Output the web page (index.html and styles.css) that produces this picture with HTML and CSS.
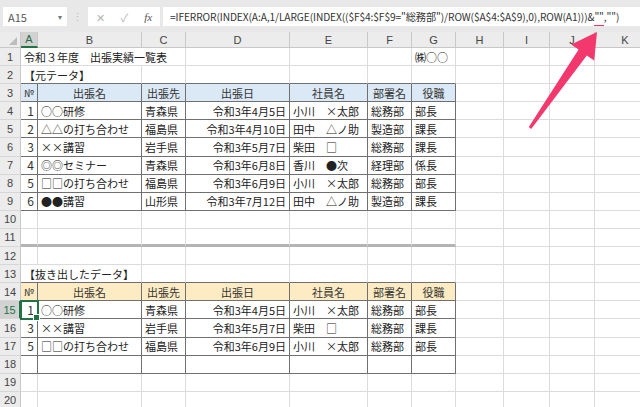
FILE: index.html
```html
<!DOCTYPE html>
<html lang="ja">
<head>
    <meta charset="UTF-8">
    <title>出張実績一覧表</title>
    <link rel="stylesheet" href="styles.css">
</head>
<body>
    <div class="toolbar">
        <div class="name-box"><span>A15</span><span class="caret">▾</span></div>
        <div class="sep">⋮</div>
        <div class="fn-box"><span>✕</span><span>✓</span><span class="fx">fx</span></div>
        <div class="formula">=IFERROR(INDEX(A:A,1/LARGE(INDEX(($F$4:$F$9="総務部")/ROW($A$4:$A$9),0),ROW(A1)))&amp;<span class="mark">""</span>,"")</div>
    </div>

    <table class="sheet">
        <colgroup>
            <col class="w-rh"><col class="w-a"><col class="w-b"><col class="w-c"><col class="w-d"><col class="w-e">
            <col class="w-f"><col class="w-g"><col class="w-h"><col class="w-i"><col class="w-j"><col class="w-k">
        </colgroup>
        <tr class="colhead">
            <th class="corner"></th><th class="on">A</th><th>B</th><th>C</th><th>D</th><th>E</th>
            <th>F</th><th>G</th><th>H</th><th>I</th><th>J</th><th>K</th>
        </tr>
        <tr>
            <td class="rh">1</td><td colspan="3">令和３年度　出張実績一覧表</td><td></td><td></td><td></td><td>㈱○○</td><td></td><td></td><td></td><td></td>
        </tr>
        <tr>
            <td class="rh">2</td><td colspan="2" class="top">【元テータ】</td><td class="top"></td><td class="top"></td><td class="top"></td><td class="top"></td><td class="top"></td><td></td><td></td><td></td><td></td>
        </tr>
        <tr>
            <td class="rh">3</td><td class="t hd blue no">№</td><td class="t hd blue">出張名</td><td class="t hd blue">出張先</td><td class="t hd blue">出張日</td><td class="t hd blue">社員名</td><td class="t hd blue">部署名</td><td class="t hd blue">役職</td><td></td><td></td><td></td><td></td>
        </tr>
        <tr>
            <td class="rh">4</td><td class="t num">1</td><td class="t">○○研修</td><td class="t">青森県</td><td class="t r">令和3年4月5日</td><td class="t">小川　×太郎</td><td class="t">総務部</td><td class="t">部長</td><td></td><td></td><td></td><td></td>
        </tr>
        <tr>
            <td class="rh">5</td><td class="t num">2</td><td class="t">△△の打ち合わせ</td><td class="t">福島県</td><td class="t r">令和3年4月10日</td><td class="t">田中　△ノ助</td><td class="t">製造部</td><td class="t">課長</td><td></td><td></td><td></td><td></td>
        </tr>
        <tr>
            <td class="rh">6</td><td class="t num">3</td><td class="t">××講習</td><td class="t">岩手県</td><td class="t r">令和3年5月7日</td><td class="t">柴田　□</td><td class="t">総務部</td><td class="t">課長</td><td></td><td></td><td></td><td></td>
        </tr>
        <tr>
            <td class="rh">7</td><td class="t num">4</td><td class="t">◎◎セミナー</td><td class="t">青森県</td><td class="t r">令和3年6月8日</td><td class="t">香川　●次</td><td class="t">経理部</td><td class="t">係長</td><td></td><td></td><td></td><td></td>
        </tr>
        <tr>
            <td class="rh">8</td><td class="t num">5</td><td class="t">□□の打ち合わせ</td><td class="t">福島県</td><td class="t r">令和3年6月9日</td><td class="t">小川　×太郎</td><td class="t">総務部</td><td class="t">部長</td><td></td><td></td><td></td><td></td>
        </tr>
        <tr>
            <td class="rh">9</td><td class="t num">6</td><td class="t">●●講習</td><td class="t">山形県</td><td class="t r">令和3年7月12日</td><td class="t">田中　△ノ助</td><td class="t">製造部</td><td class="t">課長</td><td></td><td></td><td></td><td></td>
        </tr>
        <tr>
            <td class="rh">10</td><td></td><td></td><td></td><td></td><td></td><td></td><td></td><td></td><td></td><td></td><td></td>
        </tr>
        <tr class="split">
            <td class="rh">11</td><td class="fz"></td><td class="fz"></td><td class="fz"></td><td class="fz"></td><td class="fz"></td><td class="fz"></td><td class="fz"></td><td></td><td></td><td></td><td></td>
        </tr>
        <tr>
            <td class="rh">12</td><td></td><td></td><td></td><td></td><td></td><td></td><td></td><td></td><td></td><td></td><td></td>
        </tr>
        <tr>
            <td class="rh">13</td><td colspan="2" class="top">【抜き出したデータ】</td><td class="top"></td><td class="top"></td><td class="top"></td><td class="top"></td><td class="top"></td><td></td><td></td><td></td><td></td>
        </tr>
        <tr>
            <td class="rh">14</td><td class="t hd orange no">№</td><td class="t hd orange">出張名</td><td class="t hd orange">出張先</td><td class="t hd orange">出張日</td><td class="t hd orange">社員名</td><td class="t hd orange">部署名</td><td class="t hd orange">役職</td><td></td><td></td><td></td><td></td>
        </tr>
        <tr>
            <td class="rh on">15</td><td class="t num sel">1</td><td class="t">○○研修</td><td class="t">青森県</td><td class="t r">令和3年4月5日</td><td class="t">小川　×太郎</td><td class="t">総務部</td><td class="t">部長</td><td></td><td></td><td></td><td></td>
        </tr>
        <tr>
            <td class="rh">16</td><td class="t num">3</td><td class="t">××講習</td><td class="t">岩手県</td><td class="t r">令和3年5月7日</td><td class="t">柴田　□</td><td class="t">総務部</td><td class="t">課長</td><td></td><td></td><td></td><td></td>
        </tr>
        <tr>
            <td class="rh">17</td><td class="t num">5</td><td class="t">□□の打ち合わせ</td><td class="t">福島県</td><td class="t r">令和3年6月9日</td><td class="t">小川　×太郎</td><td class="t">総務部</td><td class="t">部長</td><td></td><td></td><td></td><td></td>
        </tr>
        <tr>
            <td class="rh">18</td><td class="t"></td><td class="t"></td><td class="t"></td><td class="t"></td><td class="t"></td><td class="t"></td><td class="t"></td><td></td><td></td><td></td><td></td>
        </tr>
        <tr>
            <td class="rh">19</td><td></td><td></td><td></td><td></td><td></td><td></td><td></td><td></td><td></td><td></td><td></td>
        </tr>
        <tr>
            <td class="rh">20</td><td></td><td></td><td></td><td></td><td></td><td></td><td></td><td></td><td></td><td></td><td></td>
        </tr>
    </table>

    <!-- annotation arrow pointing at the &"" part -->
    <svg class="arrow" width="640" height="407" viewBox="0 0 640 407">
        <polygon points="528.8,127.1 578.6,49.6 571.2,44.5 597,32 594.2,60.5 586.8,55.4 531.2,128.9" fill="#f2386c"/>
    </svg>
</body>
</html>
```

FILE: styles.css
```css
* {
    margin: 0;
    padding: 0;
    box-sizing: border-box;
}

body {
    width: 640px;
    height: 407px;
    overflow: hidden;
    position: relative;
    background-color: #fff;
    color: #222;
    font-family: "Noto Sans CJK JP", "Noto Sans", sans-serif;
}

/* Formula bar */
.toolbar {
    height: 32px;
    background-color: #e8e8e8;
    display: flex;
    align-items: flex-start;
    padding: 7px 0 0 3px;
}

.name-box {
    width: 64px;
    height: 19px;
    background-color: #fff;
    display: flex;
    align-items: center;
    justify-content: space-between;
    padding: 0 5px;
    font-size: 11px;
    color: #555;
}

.caret {
    font-size: 8px;
    color: #777;
}

.sep {
    width: 21px;
    text-align: center;
    color: #bbb;
    font-size: 11px;
    line-height: 19px;
}

.fn-box {
    width: 72px;
    height: 19px;
    background-color: #fff;
    display: flex;
    align-items: center;
    justify-content: space-around;
    font-size: 11px;
    color: #b5b5b5;
}

.fn-box .fx {
    color: #555;
    font-style: italic;
    font-family: "Liberation Serif", serif;
}

.formula {
    flex: 1;
    height: 19px;
    margin-left: 3px;
    background-color: #fff;
    padding-left: 7px;
    font-size: 10.2px;
    letter-spacing: -0.1px;
    line-height: 19px;
    white-space: nowrap;
    overflow: hidden;
    color: #333;
}

.mark {
    border-bottom: 2px solid #e8336b;
    padding-bottom: 1px;
}

/* Sheet grid */
.sheet {
    border-collapse: separate;
    border-spacing: 0;
    table-layout: fixed;
    width: 656px;
    font-size: 11px;
}

.w-rh { width: 21px; }
.w-a { width: 17px; }
.w-b { width: 104px; }
.w-c { width: 44px; }
.w-d { width: 104px; }
.w-e { width: 78px; }
.w-f { width: 44px; }
.w-g { width: 44px; }
.w-h { width: 48px; }
.w-i { width: 46px; }
.w-j { width: 45px; }
.w-k { width: 61px; }

.sheet tr {
    height: 18.1px;
}

.sheet td,
.sheet th {
    border-right: 1px solid #dcdcdc;
    border-bottom: 1px solid #dcdcdc;
    padding: 0 3px;
    line-height: 14px;
    white-space: nowrap;
    overflow: visible;
    font-weight: normal;
    text-align: left;
}

.sheet .colhead {
    height: 15px;
}

.colhead th {
    background-color: #ececec;
    color: #444;
    text-align: center;
    border-color: #c8c8c8;
    font-family: "Liberation Sans", sans-serif;
    font-size: 11px;
}

.colhead th.on {
    background-color: #d2d2d2;
    color: #1f6b42;
    border-bottom: 2px solid #217346;
}

.corner {
    position: relative;
}

.corner::after {
    content: "";
    position: absolute;
    right: 3px;
    bottom: 2px;
    border-left: 8px solid transparent;
    border-bottom: 8px solid #bdbdbd;
}

.sheet td.rh {
    background-color: #ececec;
    color: #444;
    text-align: center;
    padding: 0;
    border-right-color: #c8c8c8;
    border-bottom-color: #d6d6d6;
    font-family: "Liberation Sans", sans-serif;
    font-size: 11px;
}

.sheet td.rh.on {
    background-color: #d2d2d2;
    color: #217346;
    border-right: 2px solid #217346;
}

/* Data tables */
.sheet td.t {
    border-right-color: #707070;
    border-bottom-color: #707070;
}

.sheet td.top {
    border-bottom-color: #707070;
}

.sheet td.hd {
    text-align: center;
    color: #333;
}

.blue {
    background-color: #dbe8f5;
}

.orange {
    background-color: #fdebc4;
}

.sheet td.no {
    padding: 0;
    font-size: 10px;
}

.sheet td.num {
    text-align: right;
    padding-right: 3px;
    font-size: 12px;
    color: #333;
}

.sheet td.r {
    text-align: right;
}

.sheet td.fz {
    border-bottom: 3px solid #b4b4b4;
}

.sheet td.sel {
    position: relative;
    outline: 2px solid #217346;
    outline-offset: -1px;
}

.sel::after {
    content: "";
    position: absolute;
    right: -3px;
    bottom: -3px;
    width: 5px;
    height: 5px;
    background-color: #217346;
    border: 1px solid #fff;
}

.arrow {
    position: absolute;
    top: 0;
    left: 0;
    pointer-events: none;
}
```
